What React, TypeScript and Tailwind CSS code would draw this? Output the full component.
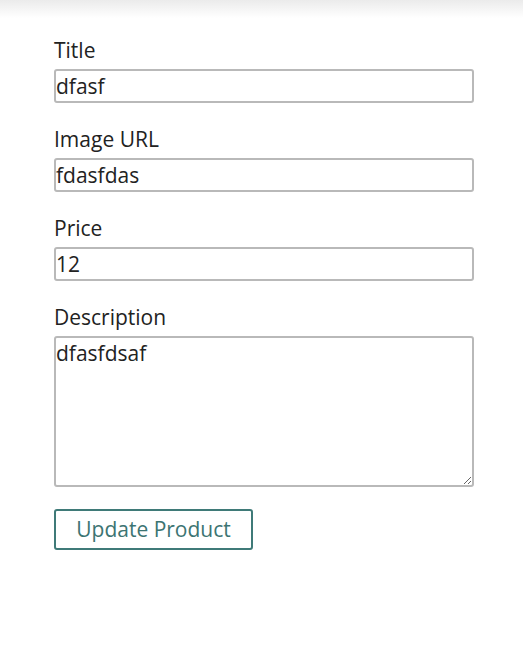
import { useState } from "react";

const font = { fontFamily: '"Open Sans", "Noto Sans", sans-serif' };

export default function App() {
  const [title, setTitle] = useState("dfasf");
  const [imageUrl, setImageUrl] = useState("fdasfdas");
  const [price, setPrice] = useState("12");
  const [description, setDescription] = useState("dfasfdsaf");

  const inputCls =
    "block w-[420px] h-[34px] px-0 border-2 border-[#b9b9b9] rounded-[3px] bg-white text-[21px] leading-[26px] text-[#222] outline-none";

  return (
    <div className="min-h-[665px] bg-white" style={font}>
      <div className="h-[18px] bg-gradient-to-b from-[#ebebeb] to-white" />
      <form className="pl-[54px] pt-[19px]" onSubmit={(e) => e.preventDefault()}>
        <div className="mb-[23px]">
          <label className="block text-[21px] leading-[26px] text-[#222] mb-[6px]">Title</label>
          <input className={inputCls} value={title} onChange={(e) => setTitle(e.target.value)} />
        </div>
        <div className="mb-[23px]">
          <label className="block text-[21px] leading-[26px] text-[#222] mb-[6px]">Image URL</label>
          <input className={inputCls} value={imageUrl} onChange={(e) => setImageUrl(e.target.value)} />
        </div>
        <div className="mb-[23px]">
          <label className="block text-[21px] leading-[26px] text-[#222] mb-[6px]">Price</label>
          <input className={inputCls} value={price} onChange={(e) => setPrice(e.target.value)} />
        </div>
        <div className="mb-[22px]">
          <label className="block text-[21px] leading-[26px] text-[#222] mb-[6px]">Description</label>
          <textarea
            className="block w-[420px] h-[151px] px-0 pt-[2px] border-2 border-[#b9b9b9] rounded-[3px] bg-white text-[21px] leading-[26px] text-[#222] outline-none"
            value={description}
            onChange={(e) => setDescription(e.target.value)}
          />
        </div>
        <button
          type="submit"
          className="w-[199px] h-[41px] border-2 border-[#3f7a78] rounded-[3px] bg-white text-[21px] text-[#3c7472]"
        >
          Update Product
        </button>
      </form>
    </div>
  );
}
